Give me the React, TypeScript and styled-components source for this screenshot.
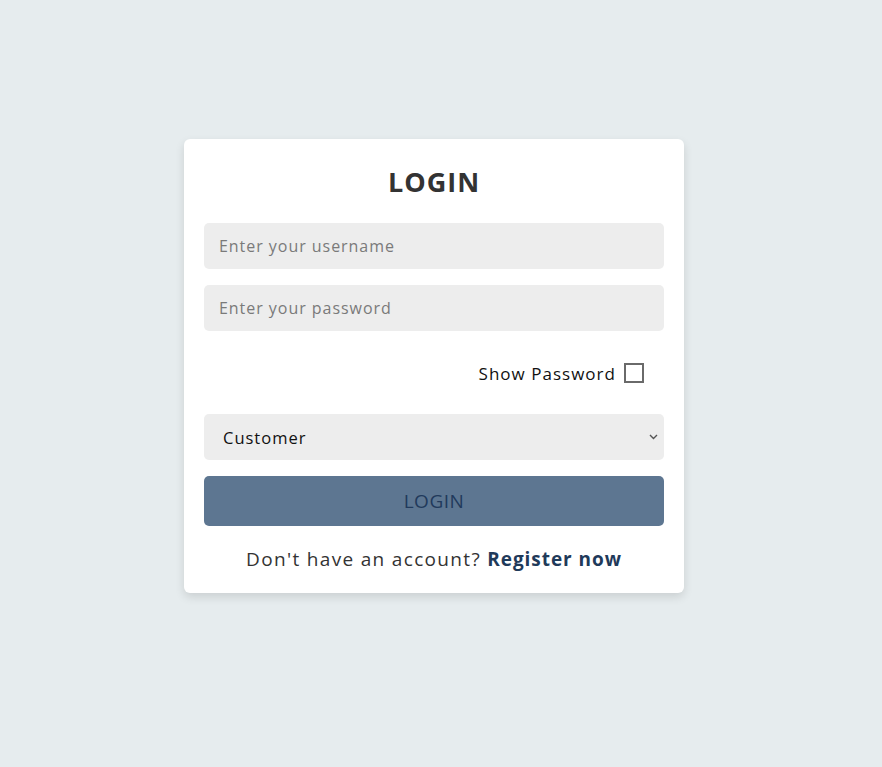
import React, { useState } from "react";
import styled, { createGlobalStyle } from "styled-components";

const GlobalStyle = createGlobalStyle`
  html, body {
    margin: 0;
    padding: 0;
    background: #e6ecee;
    font-family: "Open Sans", "Noto Sans", sans-serif;
  }
  * { box-sizing: border-box; }
`;

const Page = styled.div`
  min-height: 767px;
  display: flex;
  justify-content: center;
  align-items: flex-start;
  padding: 139px 14px 0 0;
`;

const Card = styled.form`
  width: 500px;
  background: #ffffff;
  border-radius: 6px;
  box-shadow: 0 4px 10px rgba(0, 0, 0, 0.12);
  padding: 22px 20px 19px;
  display: flex;
  flex-direction: column;
`;

const Title = styled.h2`
  margin: 0 0 20px;
  text-align: center;
  font-size: 27px;
  font-weight: 700;
  line-height: 42px;
  letter-spacing: 1px;
  color: #333333;
`;

const Field = styled.input`
  width: 100%;
  height: 46px;
  border: none;
  outline: none;
  border-radius: 5px;
  background: #ededed;
  padding: 0 15px;
  font-family: inherit;
  font-size: 16px;
  letter-spacing: 0.06em;
  color: #333;
  margin-bottom: 16px;
  &::placeholder {
    color: #7a7a7a;
  }
`;

const ShowRow = styled.label`
  display: flex;
  justify-content: flex-end;
  align-items: center;
  gap: 8px;
  height: 48px;
  margin: 2px 0 17px;
  padding-right: 20px;
  font-size: 17px;
  letter-spacing: 0.06em;
  color: #111;
`;

const Check = styled.input`
  appearance: none;
  margin: 0;
  width: 20px;
  height: 20px;
  border: 2px solid #6a6a6a;
  background: #fff;
`;

const Select = styled.select`
  appearance: none;
  width: 100%;
  height: 46px;
  border: none;
  outline: none;
  border-radius: 5px;
  background-color: #ededed;
  background-image: url("data:image/svg+xml,%3Csvg xmlns='http://www.w3.org/2000/svg' width='9' height='6' viewBox='0 0 9 6'%3E%3Cpolyline points='1,1 4.5,4.5 8,1' fill='none' stroke='%23555' stroke-width='1.4'/%3E%3C/svg%3E");
  background-repeat: no-repeat;
  background-position: right 6px center;
  padding: 0 20px 0 19px;
  font-family: inherit;
  font-size: 16.5px;
  letter-spacing: 0.06em;
  color: #111;
  margin-bottom: 16px;
`;

const Button = styled.button`
  width: 100%;
  height: 50px;
  border: none;
  border-radius: 5px;
  background: #5d7691;
  color: #213a5c;
  font-family: inherit;
  font-size: 19px;
  letter-spacing: 0.5px;
  cursor: pointer;
`;

const Footer = styled.p`
  margin: 18px 0 0;
  text-align: center;
  font-size: 19px;
  line-height: 30px;
  letter-spacing: 0.07em;
  color: #333;
`;

const RegisterLink = styled.a`
  font-weight: 700;
  letter-spacing: 0.05em;
  color: #1f3a5a;
  text-decoration: none;
`;

export default function App() {
  const [show, setShow] = useState(false);
  return (
    <>
      <GlobalStyle />
      <Page>
        <Card onSubmit={(e) => e.preventDefault()}>
          <Title>LOGIN</Title>
          <Field type="text" placeholder="Enter your username" />
          <Field type={show ? "text" : "password"} placeholder="Enter your password" />
          <ShowRow>
            Show Password
            <Check type="checkbox" checked={show} onChange={() => setShow(!show)} />
          </ShowRow>
          <Select defaultValue="customer">
            <option value="customer">Customer</option>
            <option value="seller">Seller</option>
            <option value="admin">Admin</option>
          </Select>
          <Button type="submit">LOGIN</Button>
          <Footer>
            Don't have an account? <RegisterLink href="#">Register now</RegisterLink>
          </Footer>
        </Card>
      </Page>
    </>
  );
}
